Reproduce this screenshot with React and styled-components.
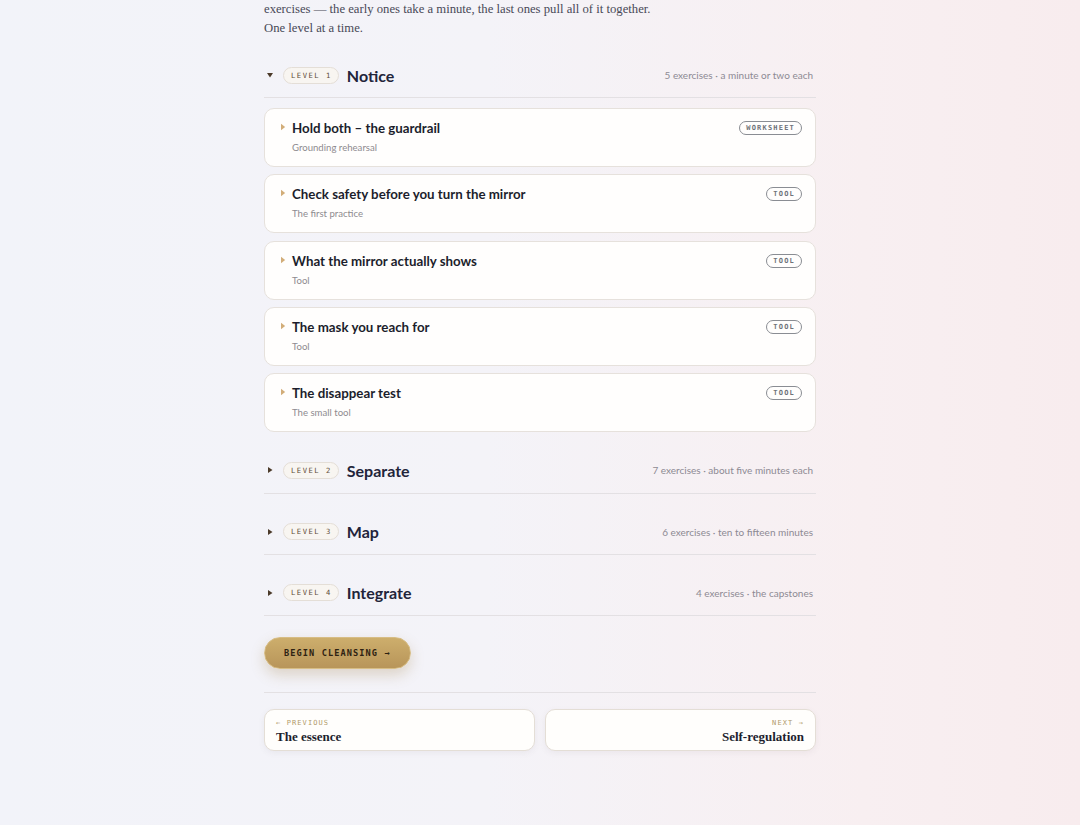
import styled, { createGlobalStyle } from "styled-components";

const GlobalStyle = createGlobalStyle`
  html, body {
    margin: 0;
    padding: 0;
  }
  body {
    min-height: 825px;
    background: linear-gradient(90deg, #f2f3f9 0%, #f4f3f8 45%, #f8eff1 80%, #f8ecee 100%);
    font-family: "Lato", "Noto Sans", sans-serif;
    color: #1d1f2e;
  }
`;

const levels = [
  {
    n: 1,
    name: "Notice",
    meta: "5 exercises · a minute or two each",
    open: true,
    items: [
      { title: "Hold both – the guardrail", sub: "Grounding rehearsal", tag: "WORKSHEET" },
      { title: "Check safety before you turn the mirror", sub: "The first practice", tag: "TOOL" },
      { title: "What the mirror actually shows", sub: "Tool", tag: "TOOL" },
      { title: "The mask you reach for", sub: "Tool", tag: "TOOL" },
      { title: "The disappear test", sub: "The small tool", tag: "TOOL" },
    ],
  },
  { n: 2, name: "Separate", meta: "7 exercises · about five minutes each" },
  { n: 3, name: "Map", meta: "6 exercises · ten to fifteen minutes" },
  { n: 4, name: "Integrate", meta: "4 exercises · the capstones" },
];

const App = () => {
  return (
    <Page>
      <GlobalStyle />
      <Column>
        <Intro>
          exercises — the early ones take a minute, the last ones pull all of it together.
          <br />
          One level at a time.
        </Intro>

        {levels.map((lvl) => (
          <Level key={lvl.n}>
            <LevelHead>
              <Caret $open={lvl.open}>
                <svg width="8" height="8" viewBox="0 0 8 8">
                  <path d="M2 1 L6.5 4 L2 7 Z" fill="currentColor" />
                </svg>
              </Caret>
              <LevelPill>LEVEL {lvl.n}</LevelPill>
              <LevelName>{lvl.name}</LevelName>
              <LevelMeta>{lvl.meta}</LevelMeta>
            </LevelHead>
            {lvl.items && (
              <Cards>
                {lvl.items.map((it) => (
                  <Card key={it.title}>
                    <CardCaret>
                      <svg width="6" height="8" viewBox="0 0 6 8">
                        <path d="M1 0.8 L5.2 4 L1 7.2 Z" fill="currentColor" />
                      </svg>
                    </CardCaret>
                    <CardText>
                      <CardTitle>{it.title}</CardTitle>
                      <CardSub>{it.sub}</CardSub>
                    </CardText>
                    <Tag>{it.tag}</Tag>
                  </Card>
                ))}
              </Cards>
            )}
          </Level>
        ))}

        <Actions>
          <Begin>BEGIN CLEANSING →</Begin>
        </Actions>

        <Pager>
          <PageLink>
            <PageLabel>← PREVIOUS</PageLabel>
            <PageTitle>The essence</PageTitle>
          </PageLink>
          <PageLink $right>
            <PageLabel>NEXT →</PageLabel>
            <PageTitle>Self-regulation</PageTitle>
          </PageLink>
        </Pager>
      </Column>
    </Page>
  );
};

const Page = styled.div`
  min-height: 825px;
`;

const Column = styled.main`
  width: 552px;
  margin: 0 auto;
  padding-bottom: 60px;
`;

const Intro = styled.p`
  margin: 0;
  font-family: "Liberation Serif", "DejaVu Serif", serif;
  font-size: 12.7px;
  line-height: 18.5px;
  color: #484957;
`;

const Level = styled.section``;

const LevelHead = styled.div`
  display: flex;
  align-items: center;
  height: 22px;
  padding: 27px 3px 11.4px 0;
  border-bottom: 1px solid #e3e0e3;
`;

const Caret = styled.span`
  display: flex;
  width: 12px;
  margin-left: 2px;
  margin-right: 5px;
  color: #4b3a2a;
  svg {
    transform: rotate(${(p) => (p.$open ? "90deg" : "0deg")});
  }
`;

const LevelPill = styled.span`
  display: inline-flex;
  align-items: center;
  height: 15px;
  padding: 0 6px 0 7px;
  border: 1px solid #e4ded7;
  background: #f8f5f1;
  border-radius: 9px;
  font-family: "DejaVu Sans Mono", "Liberation Mono", monospace;
  font-size: 7.2px;
  letter-spacing: 1.5px;
  color: #5f4d38;
`;

const LevelName = styled.h2`
  margin: 0 0 0 8px;
  font-size: 16px;
  font-weight: 700;
  color: #22243a;
`;

const LevelMeta = styled.span`
  margin-left: auto;
  font-size: 10px;
  color: #8d8a93;
`;

const Cards = styled.div`
  display: flex;
  flex-direction: column;
  gap: 7.3px;
  padding-top: 9.6px;
`;

const Card = styled.div`
  display: flex;
  align-items: flex-start;
  height: 59px;
  box-sizing: border-box;
  padding: 11px 13px 0 15px;
  background: #fffefd;
  border: 1px solid #e6e1dc;
  border-radius: 10px;
`;

const CardCaret = styled.span`
  display: flex;
  width: 12px;
  padding-top: 3px;
  color: #d2ad79;
`;

const CardText = styled.div`
  display: flex;
  flex-direction: column;
  gap: 6px;
`;

const CardTitle = styled.div`
  font-size: 13.3px;
  font-weight: 700;
  color: #1c1e2c;
`;

const CardSub = styled.div`
  font-size: 9.6px;
  color: #8e8b8f;
`;

const Tag = styled.span`
  margin-left: auto;
  margin-top: 1px;
  display: inline-flex;
  align-items: center;
  height: 12px;
  padding: 0 6px;
  border: 1px solid #8a8d93;
  border-radius: 8px;
  font-family: "DejaVu Sans Mono", "Liberation Mono", monospace;
  font-size: 7px;
  font-weight: 700;
  letter-spacing: 1.2px;
  color: #6f737a;
`;

const Actions = styled.div`
  padding: 21px 0 23px;
  border-bottom: 1px solid #e3e0e3;
`;

const Begin = styled.button`
  display: block;
  height: 32px;
  padding: 0 19px;
  border: 1px solid #d7bd85;
  border-radius: 16px;
  background: linear-gradient(180deg, #cdae6c 0%, #b8955a 100%);
  box-shadow: 0 6px 14px rgba(150, 115, 50, 0.25);
  font-family: "DejaVu Sans Mono", "Liberation Mono", monospace;
  font-size: 8.6px;
  font-weight: 700;
  letter-spacing: 1.1px;
  color: #2e2212;
  cursor: pointer;
`;

const Pager = styled.nav`
  display: grid;
  grid-template-columns: 1fr 1fr;
  gap: 10px;
  padding-top: 16px;
`;

const PageLink = styled.a`
  display: flex;
  flex-direction: column;
  align-items: ${(p) => (p.$right ? "flex-end" : "flex-start")};
  gap: 2px;
  height: 42px;
  box-sizing: border-box;
  padding: 9px 11px 0;
  background: #fffefc;
  border: 1px solid #e4ded6;
  border-radius: 10px;
  box-shadow: 0 2px 6px rgba(120, 100, 110, 0.08);
  cursor: pointer;
`;

const PageLabel = styled.span`
  font-family: "DejaVu Sans Mono", "Liberation Mono", monospace;
  font-size: 7px;
  letter-spacing: 1.1px;
  color: #b19a6a;
`;

const PageTitle = styled.span`
  font-family: "Liberation Serif", "DejaVu Serif", serif;
  font-size: 13px;
  font-weight: 700;
  color: #1d1f2e;
`;

export default App;
